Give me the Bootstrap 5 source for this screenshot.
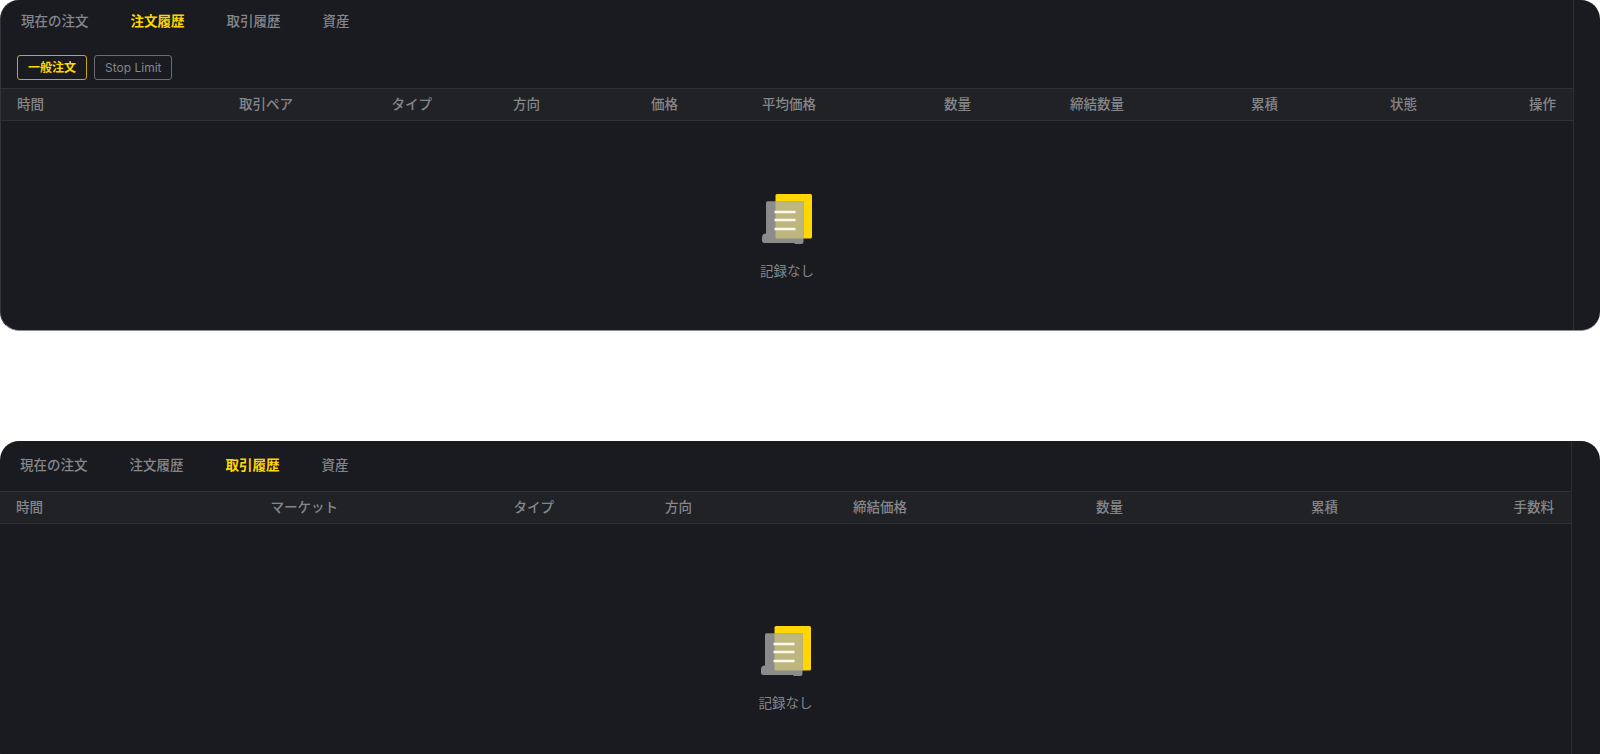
<!DOCTYPE html>
<html lang="ja">
<head>
  <meta charset="UTF-8">
  <meta name="viewport" content="width=device-width, initial-scale=1.0">
  <title>注文履歴</title>
  <link href="https://cdn.jsdelivr.net/npm/bootstrap@5.3.0/dist/css/bootstrap.min.css" rel="stylesheet">
  <style>
    html, body {
      height: 100%;
      overflow: hidden;
      background: #fff;
      font-family: Inter, "Noto Sans CJK JP", sans-serif;
    }
    .order-panel {
      background: #191b20;
      color: #85868a;
      font-size: 13.5px;
      border-radius: 19px;
      overflow: hidden;
    }
    .panel-one { height: 331px; border-left: 1px solid #33353a; border-bottom: 1px solid #8d8e90; }
    .panel-two { height: 330px; margin-top: 110px; }
    .panel-main { flex: 1 1 auto; min-width: 0; }
    .panel-rail { border-left: 1px solid #2c2e33; }
    .panel-one .panel-rail { width: 27px; }
    .panel-two .panel-rail { width: 29px; }
    .tab-row { gap: 42px; padding-left: 20px; line-height: 20px; font-weight: 500; }
    .panel-one .tab-row { padding-top: 11px; }
    .panel-two .tab-row { padding-top: 14px; height: 50px; }
    .tab-active { color: #ffd600; font-weight: 700; }
    .type-row { padding: 24px 0 0 16px; height: 57px; gap: 7px; }
    .type-btn {
      height: 25px;
      padding: 0 10px;
      font-size: 12px;
      line-height: 23px;
      color: #85868a;
      border: 1px solid #6b6c70;
      border-radius: 3px;
      --bs-btn-hover-color: #85868a;
    }
    .type-on { color: #ffd600; border-color: #c9a90a; font-weight: 600; }
    .head-row {
      display: grid;
      height: 33px;
      align-items: center;
      background: #202226;
      border-top: 1px solid #2f3136;
      border-bottom: 1px solid #2f3136;
      padding-left: 16px;
      text-align: right;
      font-weight: 500;
    }
    .head-row > :first-child { text-align: left; }
    .head-one { grid-template-columns: 100px 176px 139px 108px 138px 138px 155px 153px 154px 139px 139px; }
    .head-two { grid-template-columns: 100px 222px 216px 138px 215px 216px 215px 216px; }
    .empty-box { text-align: center; }
    .panel-one .empty-box { padding-top: 73px; }
    .panel-two .empty-box { padding-top: 102px; }
    .empty-box svg { display: block; margin: 0 auto 17px; }
    .empty-box span { line-height: 20px; }
  </style>
</head>
<body>
  <div class="order-panel panel-one d-flex">
    <div class="panel-main">
      <div class="tab-row d-flex">
        <span>現在の注文</span>
        <span class="tab-active">注文履歴</span>
        <span>取引履歴</span>
        <span>資産</span>
      </div>
      <div class="type-row d-flex">
        <button type="button" class="btn type-btn type-on">一般注文</button>
        <button type="button" class="btn type-btn">Stop Limit</button>
      </div>
      <div class="head-row head-one">
        <span>時間</span><span>取引ペア</span><span>タイプ</span><span>方向</span><span>価格</span><span>平均価格</span><span>数量</span><span>締結数量</span><span>累積</span><span>状態</span><span>操作</span>
      </div>
      <div class="empty-box">
        <svg width="50" height="50" viewBox="0 0 50 50">
          <rect x="13.500" y="0" width="36.500" height="44.500" rx="1.500" fill="#ffd600"/>
          <path d="M4 8.800a1.500 1.500 0 0 1 1.500-1.500H41.500V47.500a2.500 2.500 0 0 1-2.500 2.500H33l-1-1H2.500a2.500 2.500 0 0 1-2.500-2.500v-3a4 4 0 0 1 4-4z" fill="#8b8b8b"/>
          <path d="M13.500 7.300h28v37.200H13.500z" fill="#bdb67e"/>
          <path d="M12.500 18h21M12.500 26h21M12.500 35h21" stroke="#fbf9ea" stroke-width="2.400" fill="none"/>
        </svg>
        <span>記録なし</span>
      </div>
    </div>
    <div class="panel-rail"></div>
  </div>

  <div class="order-panel panel-two d-flex">
    <div class="panel-main">
      <div class="tab-row d-flex">
        <span>現在の注文</span>
        <span>注文履歴</span>
        <span class="tab-active">取引履歴</span>
        <span>資産</span>
      </div>
      <div class="head-row head-two">
        <span>時間</span><span>マーケット</span><span>タイプ</span><span>方向</span><span>締結価格</span><span>数量</span><span>累積</span><span>手数料</span>
      </div>
      <div class="empty-box">
        <svg width="50" height="50" viewBox="0 0 50 50">
          <rect x="13.500" y="0" width="36.500" height="44.500" rx="1.500" fill="#ffd600"/>
          <path d="M4 8.800a1.500 1.500 0 0 1 1.500-1.500H41.500V47.500a2.500 2.500 0 0 1-2.500 2.500H33l-1-1H2.500a2.500 2.500 0 0 1-2.500-2.500v-3a4 4 0 0 1 4-4z" fill="#8b8b8b"/>
          <path d="M13.500 7.300h28v37.200H13.500z" fill="#bdb67e"/>
          <path d="M12.500 18h21M12.500 26h21M12.500 35h21" stroke="#fbf9ea" stroke-width="2.400" fill="none"/>
        </svg>
        <span>記録なし</span>
      </div>
    </div>
    <div class="panel-rail"></div>
  </div>
  <script src="https://cdn.jsdelivr.net/npm/bootstrap@5.3.0/dist/js/bootstrap.bundle.min.js"></script>
</body>
</html>
